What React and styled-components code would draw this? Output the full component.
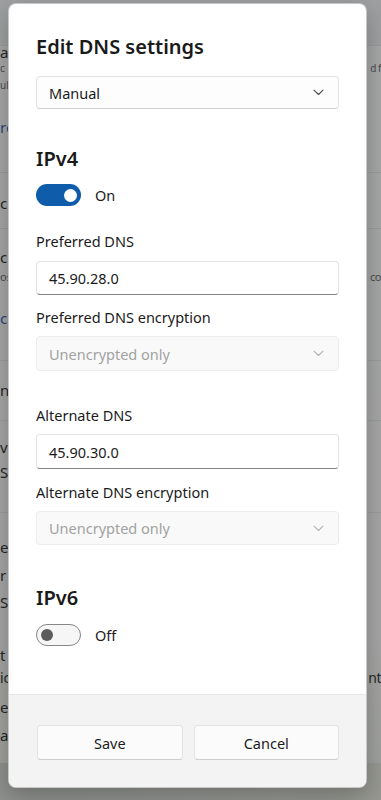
import React from "react";
import styled, { createGlobalStyle } from "styled-components";

const Global = createGlobalStyle`
  html, body { margin: 0; padding: 0; }
  body {
    width: 381px;
    height: 800px;
    overflow: hidden;
    background: #a6a7a7;
    font-family: "Noto Sans", "Open Sans", "Liberation Sans", sans-serif;
  }
`;

/* ---------- dimmed background page ---------- */
const Page = styled.div`
  position: relative;
  width: 381px;
  height: 800px;
  display: flex;
  flex-direction: column;
  background: linear-gradient(180deg, #a6a7a7 0%, #a5a6a5 80%, #9d9f9a 100%);
  overflow: hidden;
`;

const TopBand = styled.div`
  height: 45px;
  background: #9fa0a1;
  border-bottom: 1px solid #9a9b9b;
`;

const BgLine = styled.div`
  display: flex;
  justify-content: space-between;
  height: ${(p) => p.$h}px;
  margin-top: ${(p) => p.$mt}px;
  line-height: ${(p) => p.$h}px;
  font-size: ${(p) => p.$fs}px;
  color: ${(p) => (p.$blue ? "#25477a" : p.$muted ? "#4a4b4b" : "#262727")};
  white-space: nowrap;
`;

const BgLeft = styled.span``;

const BgRight = styled.span`
  width: 13px;
  text-align: right;
  letter-spacing: -0.5px;
`;

const Separator = styled.div`
  height: 1px;
  margin-top: ${(p) => p.$mt}px;
  background: #9b9c9c;
`;

const BottomBand = styled.div`
  flex: 1;
  margin-top: 20px;
  background: linear-gradient(90deg, #8f918f, #969891);
`;

const bgLines = [
  { c: 52, t: "a", fs: 15, h: 16 },
  { c: 68, t: "c", r: "d f", fs: 10, h: 10, muted: true },
  { c: 85, t: "ul", fs: 10, h: 10, muted: true },
  { c: 127, t: "re", fs: 15, h: 16, blue: true },
  { sep: 172 },
  { c: 203, t: "c", fs: 15, h: 16 },
  { sep: 228 },
  { c: 257, t: "c", fs: 15, h: 16 },
  { c: 277, t: "os", r: "co", fs: 11, h: 12, muted: true },
  { c: 318, t: "ca", fs: 15, h: 16, blue: true },
  { sep: 360 },
  { c: 390, t: "n", fs: 15, h: 16 },
  { sep: 420 },
  { c: 447, t: "ve", fs: 15, h: 16 },
  { c: 472, t: "S", fs: 15, h: 16 },
  { sep: 512 },
  { c: 547, t: "ec", fs: 15, h: 16 },
  { c: 575, t: "r", fs: 15, h: 16 },
  { c: 602, t: "S", fs: 15, h: 16 },
  { c: 655, t: "t", fs: 15, h: 16 },
  { c: 678, t: "ic", r: "nt", fs: 14, h: 16 },
  { c: 707, t: "er", fs: 15, h: 16 },
  { c: 735, t: "a", fs: 15, h: 16 },
];

function Background() {
  let y = 46;
  const rows = [];
  bgLines.forEach((l, i) => {
    if (l.sep) {
      rows.push(<Separator key={i} $mt={l.sep - y} />);
      y = l.sep + 1;
      return;
    }
    const top = l.c - l.h / 2;
    const mt = top - y;
    y = top + l.h;
    rows.push(
      <BgLine key={i} $h={l.h} $mt={mt} $fs={l.fs} $blue={l.blue} $muted={l.muted}>
        <BgLeft>{l.t}</BgLeft>
        {l.r ? <BgRight>{l.r}</BgRight> : null}
      </BgLine>
    );
  });
  return (
    <>
      <TopBand />
      {rows}
      <BottomBand />
    </>
  );
}

/* ---------- dialog ---------- */
const Dialog = styled.div`
  position: absolute;
  left: 8px;
  top: 3px;
  width: 359px;
  height: 785px;
  box-sizing: border-box;
  display: flex;
  flex-direction: column;
  background: #ffffff;
  border: 1px solid rgba(0, 0, 0, 0.22);
  border-radius: 8px;
  box-shadow: 0 8px 24px rgba(0, 0, 0, 0.25);
  overflow: hidden;
  color: #1b1b1b;
`;

const Body = styled.div`
  flex: 1;
  display: flex;
  flex-direction: column;
  padding: 29px 27px 0 27px;
`;

const Title = styled.div`
  font-size: 20px;
  line-height: 28px;
  font-weight: 600;
  color: #1a1a1a;
  margin-top: ${(p) => p.$mt || 0}px;
`;

const Label = styled.div`
  font-size: 14.5px;
  line-height: 20px;
  color: #1b1b1b;
  margin-top: ${(p) => p.$mt || 0}px;
`;

const Box = styled.div`
  box-sizing: border-box;
  height: ${(p) => p.$h || 34}px;
  margin-top: ${(p) => p.$mt || 0}px;
  display: flex;
  align-items: center;
  justify-content: space-between;
  padding: 0 14px 0 12px;
  border-radius: 4px;
  font-size: 14.5px;
  background: ${(p) => (p.$disabled ? "#f9f9f9" : p.$input ? "#ffffff" : "#fdfdfd")};
  color: ${(p) => (p.$disabled ? "#a2a2a2" : "#1b1b1b")};
  border: 1px solid ${(p) => (p.$disabled ? "#ececec" : "#e3e3e3")};
  border-bottom: ${(p) =>
    p.$input ? "1.5px solid #848484" : p.$disabled ? "1px solid #ececec" : "1px solid #d0d0d0"};
`;

const Chevron = ({ color }) => (
  <svg width="11" height="7" viewBox="0 0 11 7" fill="none">
    <path d="M1 1.2l4.5 4.3L10 1.2" stroke={color} strokeWidth="1.1" strokeLinecap="round" strokeLinejoin="round" />
  </svg>
);

const ToggleRow = styled.div`
  display: flex;
  align-items: center;
  gap: 14px;
  margin-top: ${(p) => p.$mt || 0}px;
  font-size: 14.5px;
  color: #1b1b1b;
`;

const Track = styled.div`
  box-sizing: border-box;
  width: 45px;
  height: 22px;
  border-radius: 11px;
  display: flex;
  align-items: center;
  justify-content: ${(p) => (p.$on ? "flex-end" : "flex-start")};
  padding: 0 4px;
  background: ${(p) => (p.$on ? "#0f5cab" : "#f6f6f6")};
  border: ${(p) => (p.$on ? "none" : "1px solid #878787")};
`;

const Knob = styled.div`
  width: ${(p) => (p.$on ? 13 : 12)}px;
  height: ${(p) => (p.$on ? 13 : 12)}px;
  border-radius: 50%;
  background: ${(p) => (p.$on ? "#ffffff" : "#5c5c5c")};
`;

const Footer = styled.div`
  display: flex;
  gap: 11px;
  padding: 30px 27px 27px 28px;
  background: #f3f3f3;
  border-top: 1px solid #e5e5e5;
`;

const Button = styled.button`
  flex: 1;
  box-sizing: border-box;
  height: 35px;
  border-radius: 4px;
  background: #fbfbfb;
  border: 1px solid #e3e3e3;
  border-bottom: 1px solid #cdcdcd;
  font-family: inherit;
  font-size: 14.5px;
  color: #1b1b1b;
`;

function Toggle({ on, mt }) {
  return (
    <ToggleRow $mt={mt}>
      <Track $on={on}>
        <Knob $on={on} />
      </Track>
      <span>{on ? "On" : "Off"}</span>
    </ToggleRow>
  );
}

export default function App() {
  return (
    <>
      <Global />
      <Page>
        <Background />
        <Dialog>
          <Body>
            <Title>Edit DNS settings</Title>
            <Box $mt={15} $h={33}>
              <span>Manual</span>
              <Chevron color="#4a4a4a" />
            </Box>

            <Title $mt={36}>IPv4</Title>
            <Toggle on mt={11} />

            <Label $mt={25}>Preferred DNS</Label>
            <Box $input $mt={10}>
              <span>45.90.28.0</span>
            </Box>
            <Label $mt={12}>Preferred DNS encryption</Label>
            <Box $disabled $mt={9} $h={35}>
              <span>Unencrypted only</span>
              <Chevron color="#b4b4b4" />
            </Box>

            <Label $mt={34}>Alternate DNS</Label>
            <Box $input $mt={9} $h={35}>
              <span>45.90.30.0</span>
            </Box>
            <Label $mt={13}>Alternate DNS encryption</Label>
            <Box $disabled $mt={9}>
              <span>Unencrypted only</span>
              <Chevron color="#b4b4b4" />
            </Box>

            <Title $mt={39}>IPv6</Title>
            <Toggle on={false} mt={12} />
          </Body>
          <Footer>
            <Button>Save</Button>
            <Button>Cancel</Button>
          </Footer>
        </Dialog>
      </Page>
    </>
  );
}
